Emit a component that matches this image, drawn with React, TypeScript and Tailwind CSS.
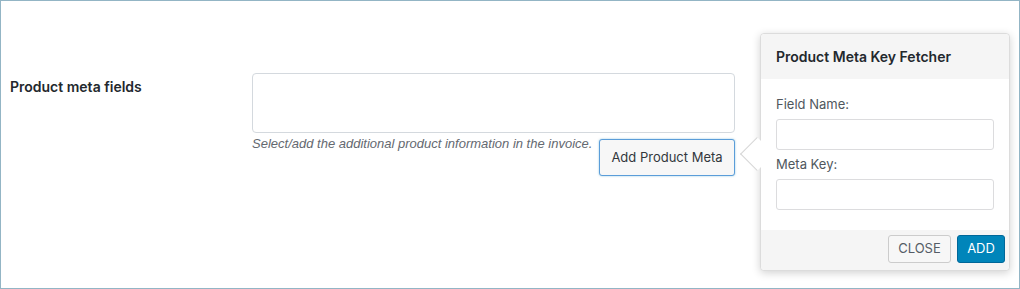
export default function App() {
  return (
    <div className="relative w-[1020px] h-[289px] bg-white border border-[#93b5c5] font-['Inter',sans-serif] text-[#23282d] overflow-hidden">
      {/* Settings row */}
      <div className="flex pt-[72px] pl-[9px]">
        <div className="w-[242px] pt-[4px] text-[14px] font-semibold leading-[20px]">Product meta fields</div>
        <div className="w-[483px]">
          <div className="h-[60px] rounded-[4px] border border-[#d4d9de] bg-white" />
          <div className="flex justify-between items-start">
            <p className="mt-[2px] whitespace-nowrap font-['Liberation_Sans',sans-serif] text-[13px] italic text-[#646970] leading-[18px]">
              Select/add the additional product information in the invoice.
            </p>
            <button className="mt-[6px] shrink-0 whitespace-nowrap h-[37px] w-[136px] rounded-[3px] border border-[#5b9dd9] bg-[#f7f7f7] text-[13px] text-[#32373c] shadow-[0_0_2px_rgba(30,140,190,0.5)]">
              Add Product Meta
            </button>
          </div>
        </div>
      </div>

      {/* Popover */}
      <div className="absolute left-[759px] top-[32px] w-[250px] rounded-[4px] border border-[#dcdcdc] bg-white shadow-[0_2px_8px_rgba(0,0,0,0.18)]">
        <div className="absolute left-[-16px] top-[108px] w-[24px] h-[24px] rotate-45 bg-white border-l border-b border-[#d6d6d6]" />
        <div className="relative h-[45px] flex items-center px-[15px] bg-[#f5f5f5] rounded-t-[4px] text-[14px] font-semibold">
          Product Meta Key Fetcher
        </div>
        <div className="relative px-[15px] pt-[16px] pb-[20px] bg-white">
          <label className="block text-[13px] text-[#50575e] leading-[18px]">Field Name:</label>
          <input className="mt-[6px] block w-[218px] h-[31px] rounded-[3px] border border-[#dcdcde] bg-white" />
          <label className="mt-[5px] block text-[13px] text-[#50575e] leading-[18px]">Meta Key:</label>
          <input className="mt-[6px] block w-[218px] h-[31px] rounded-[3px] border border-[#dcdcde] bg-white" />
        </div>
        <div className="flex justify-end gap-[6px] pl-[5px] pr-[4px] pt-[5px] pb-[7px] bg-[#f5f5f5] rounded-b-[4px]">
          <button className="h-[28px] w-[63px] rounded-[3px] border border-[#cccccc] bg-[#f7f7f7] text-[13px] text-[#555d66]">
            CLOSE
          </button>
          <button className="h-[28px] w-[48px] rounded-[3px] border border-[#006799] bg-[#0085ba] text-[13px] text-white">
            ADD
          </button>
        </div>
      </div>
    </div>
  )
}
